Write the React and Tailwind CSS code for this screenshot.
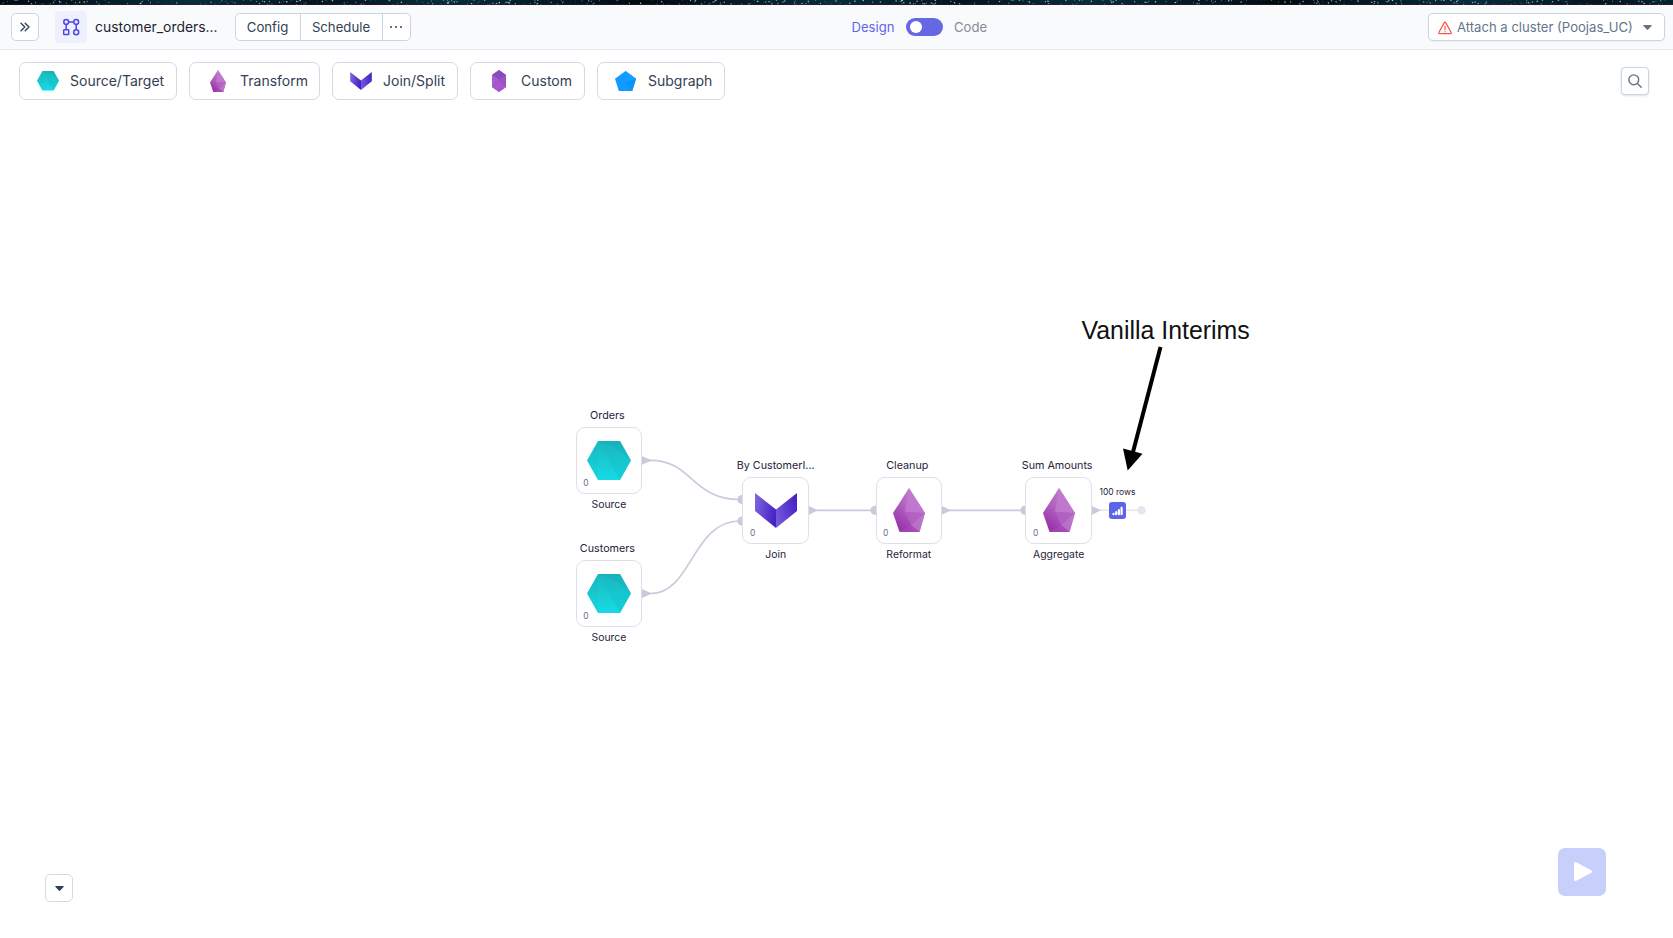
import React from "react";

const stars = Array.from({ length: 620 }, (_, i) => {
  const a = Math.abs(Math.sin(i * 12.9898 + 1) * 43758.5453) % 1;
  const b = Math.abs(Math.sin(i * 78.233 + 2) * 24634.6345) % 1;
  const c = Math.abs(Math.sin(i * 39.425 + 3) * 9631.137) % 1;
  return { x: a * 1673, y: b * 5, r: 0.3 + c * 0.5, o: 0.25 + c * 0.6 };
});

function StarStrip() {
  return (
    <svg className="block h-[5px] w-full shrink-0 bg-[#03151f]" viewBox="0 0 1673 5" preserveAspectRatio="none">
      <defs>
        <linearGradient id="sky" x1="0" x2="320" gradientUnits="userSpaceOnUse" spreadMethod="reflect">
          <stop offset="0" stopColor="#020a10" />
          <stop offset="0.6" stopColor="#062c3d" />
          <stop offset="1" stopColor="#04141e" />
        </linearGradient>
      </defs>
      <rect width="1673" height="5" fill="url(#sky)" />
      {stars.map((s, i) => (
        <circle key={i} cx={s.x} cy={s.y} r={s.r} fill="#b4dbe2" opacity={s.o} />
      ))}
      <rect y="4.4" width="1673" height="0.6" fill="#3d1824" />
    </svg>
  );
}

function Hexagon({ className }) {
  return (
    <svg className={className} viewBox="0 0 44 39">
      <defs>
        <linearGradient id="teal" x1="0" y1="0" x2="0" y2="1">
          <stop offset="0" stopColor="#1bb8c0" />
          <stop offset="0.55" stopColor="#19ccd3" />
          <stop offset="1" stopColor="#15dbe4" />
        </linearGradient>
      </defs>
      <path d="M11 0h22l11 19.5L33 39H11L0 19.5z" fill="url(#teal)" />
      <path d="M11 0h22L44 19.5 31 8z" fill="#12a3ad" opacity=".25" />
      <path d="M11 0l11 19.5L33 39 44 19.5 33 0z" fill="#0fb4bd" opacity=".14" />
      <path d="M11 0v39L0 19.5z" fill="#0fb4bd" opacity=".12" />
      <path d="M22 19.5h22L33 39z" fill="#10c4cd" opacity=".25" />
    </svg>
  );
}

function Drop({ className }) {
  return (
    <svg className={className} viewBox="0 0 32 44">
      <defs>
        <linearGradient id="dropBase" x1="0.7" y1="0.1" x2="0.25" y2="0.9">
          <stop offset="0" stopColor="#c07acd" />
          <stop offset="0.45" stopColor="#b364c2" />
          <stop offset="1" stopColor="#9a36ac" />
        </linearGradient>
      </defs>
      <path d="M16 0l16 25-5.500 19h-20L0 25z" fill="url(#dropBase)" />
      <path d="M16 0l16 25-20-1z" fill="#c27bd0" opacity=".8" />
      <path d="M12 24l20 1-14 12z" fill="#b363c2" opacity=".8" />
      <path d="M32 25L18 37l8.500 7z" fill="#bd79cb" opacity=".8" />
      <path d="M18 37l8.500 7h-20z" fill="#ab4ebb" opacity=".5" />
    </svg>
  );
}

function Chevron({ className }) {
  return (
    <svg className={className} viewBox="0 0 42 35">
      <defs>
        <linearGradient id="chevL" x1="0" y1="0.2" x2="1" y2="0.5">
          <stop offset="0" stopColor="#7e65dc" />
          <stop offset="1" stopColor="#4522c6" />
        </linearGradient>
        <linearGradient id="chevR" x1="0" y1="0.7" x2="1" y2="0.3">
          <stop offset="0" stopColor="#7658dc" />
          <stop offset="1" stopColor="#4522c6" />
        </linearGradient>
      </defs>
      <path d="M0 0l21 16.500V35L0 18z" fill="url(#chevL)" />
      <path d="M42 0L21 16.500V35l21-17z" fill="url(#chevR)" />
    </svg>
  );
}

function Crystal({ className }) {
  return (
    <svg className={className} viewBox="0 0 14 22">
      <path d="M7 0l7 5v12l-7 5-7-5V5z" fill="#9c52c6" />
      <path d="M7 0l7 5-7 5-7-5z" fill="#8a4cbc" />
      <path d="M0 5l7 4-7 8z" fill="#a35fce" />
      <path d="M14 5L7 9.500 14 17z" fill="#9853c6" />
      <path d="M0 17l7-7 7 7-7 5z" fill="#a857cb" />
    </svg>
  );
}

function Pentagon({ className }) {
  return (
    <svg className={className} viewBox="0 0 21 20">
      <path d="M10.500 0L21 7.800 17.200 20H3.800L0 7.800z" fill="#0f9bff" />
      <path d="M10.500 11L21 7.800 17.200 20z" fill="#0a93f8" />
      <path d="M10.500 0L21 7.800l-10.500 3.200z" fill="#139fff" />
    </svg>
  );
}

const palette = [
  { label: "Source/Target", width: "w-[158px]", icon: <Hexagon className="h-[19.5px] w-[22px]" /> },
  { label: "Transform", width: "w-[131px]", icon: <Drop className="h-[22px] w-[16px]" /> },
  { label: "Join/Split", width: "w-[126px]", icon: <Chevron className="h-[18px] w-[22px]" /> },
  { label: "Custom", width: "w-[115px]", icon: <Crystal className="h-[22px] w-[14px]" /> },
  { label: "Subgraph", width: "w-[128px]", icon: <Pentagon className="mr-px h-[20px] w-[21px]" /> },
];

const nodes = [
  { pos: "left-[575.7px] top-[427px]", shift: "ml-[-1.5px]", title: "Orders", kind: "Source", icon: <Hexagon className="h-[39px] w-[44px]" /> },
  { pos: "left-[575.7px] top-[560px]", shift: "ml-[-1.5px]", title: "Customers", kind: "Source", icon: <Hexagon className="h-[39px] w-[44px]" /> },
  { pos: "left-[742.4px] top-[477px]", shift: "ml-0", title: "By CustomerI...", kind: "Join", icon: <Chevron className="h-[35px] w-[42px]" /> },
  { pos: "left-[875.5px] top-[477px]", shift: "ml-[-1.5px]", title: "Cleanup", kind: "Reformat", icon: <Drop className="h-[44px] w-[32px]" /> },
  { pos: "left-[1025.4px] top-[477px]", shift: "ml-[-1.5px]", title: "Sum Amounts", kind: "Aggregate", icon: <Drop className="h-[44px] w-[32px]" /> },
];

function Node({ pos, shift, title, kind, icon }) {
  return (
    <div className={`absolute flex h-[66.5px] w-[66.5px] items-center justify-center rounded-[9px] border border-[#dfdfec] bg-white ${pos}`}>
      <span className={`absolute -top-[21px] left-1/2 -translate-x-1/2 whitespace-nowrap text-[10.75px] leading-[17px] text-[#24243a] ${shift}`}>{title}</span>
      {icon}
      <span className="absolute bottom-[4px] left-[6.5px] text-[8.5px] leading-[12px] text-[#64748b]">0</span>
      <span className="absolute top-[69px] left-1/2 -translate-x-1/2 whitespace-nowrap text-[10.4px] leading-[16px] text-[#24243a]">{kind}</span>
    </div>
  );
}

function Edges() {
  return (
    <svg className="absolute inset-0 h-[938px] w-[1673px]" viewBox="0 0 1673 938" fill="none">
      <g stroke="#cbcadd" strokeWidth="1.7">
        <path d="M645 460.400h6C692 460.400 692 499.500 740 499.500" />
        <path d="M645 593.500h6C692 593.500 692 521 740 521" />
        <path d="M812 510.300h62M945 510.300h79" />
      </g>
      <path d="M1095 510.300h46" stroke="#e6e6ee" strokeWidth="1.4" />
      <g fill="#cbcadd">
        <path d="M642 456l10 4.400-10 4.400zM642 589.100l10 4.400-10 4.400zM809 505.900l9 4.400-9 4.400zM942 505.900l9 4.400-9 4.400zM1092 505.900l9 4.400-9 4.400z" />
        <circle cx="742" cy="499.500" r="4.600" />
        <circle cx="742" cy="521" r="4.600" />
        <circle cx="875" cy="510.300" r="4.600" />
        <circle cx="1025" cy="510.300" r="4.600" />
      </g>
      <circle cx="1141.500" cy="510.300" r="4.200" fill="#e6e6ee" />
      <path d="M1160.500 347L1133 452" stroke="#000" strokeWidth="4" />
      <path d="M1123 448.500l19.500 5.300-14.800 16.700z" fill="#000" />
    </svg>
  );
}

function Header() {
  return (
    <header className="relative flex h-[45px] shrink-0 items-center justify-between border-b border-[#e2e8f0] bg-[#f8fafc] pr-2 pl-[11px] text-[#334155]">
      <div className="flex items-center">
        <button className="flex h-7 w-7 items-center justify-center rounded-[5px] border border-[#cbd5e1] bg-white">
          <svg className="h-[10px] w-[10px]" viewBox="0 0 10 10" fill="none" stroke="#334155" strokeWidth="1.4" strokeLinecap="round" strokeLinejoin="round">
            <path d="M1 1.200L4.800 5 1 8.800M5.200 1.200L9 5 5.200 8.800" />
          </svg>
        </button>
        <div className="ml-4 flex h-8 w-8 items-center justify-center rounded bg-[#eef0fe]">
          <svg className="h-[18px] w-[18px]" viewBox="0 0 18 18" fill="none" stroke="#4f46e5" strokeWidth="1.5">
            <circle cx="4.200" cy="3.900" r="2.400" />
            <circle cx="14.200" cy="3.900" r="2.400" />
            <rect x="1.700" y="11.800" width="5" height="4.800" rx="0.600" />
            <circle cx="14.200" cy="14.200" r="2.500" />
            <path d="M6.600 3.900h5.200M4.200 6.300v5.500M14.200 6.300v5.400" />
          </svg>
        </div>
        <span className="ml-2 w-[124px] whitespace-nowrap text-[13.9px] leading-5 text-[#1e1e32]">customer_orders...</span>
        <div className="ml-[15.500px] flex h-7 w-[176px] items-stretch overflow-hidden rounded-[5px] border border-[#cbd5e1] bg-white text-[13.2px]">
          <button className="w-[65px] border-r border-[#cbd5e1] pt-[1.5px]">Config</button>
          <button className="w-[82px] border-r border-[#cbd5e1] pt-[1.5px]">Schedule</button>
          <button className="flex flex-1 items-center justify-center gap-[2.5px]">
            <i className="h-[2.5px] w-[2.5px] rounded-full bg-[#334155]" />
            <i className="h-[2.5px] w-[2.5px] rounded-full bg-[#334155]" />
            <i className="h-[2.5px] w-[2.5px] rounded-full bg-[#334155]" />
          </button>
        </div>
      </div>
      <div className="absolute left-[851.5px] flex items-center text-[13.1px]">
        <span className="w-[54.500px] pt-[1.5px] text-[#6366e8]">Design</span>
        <span className="flex h-[18px] w-[37px] items-center rounded-full bg-[#6667e3] pl-[4px]">
          <i className="h-3 w-3 rounded-full bg-white" />
        </span>
        <span className="ml-[11px] pt-[1.5px] text-[#8a8a96]">Code</span>
      </div>
      <button className="flex h-7 w-[237px] items-center rounded-[5px] border border-[#cbd5e1] bg-white pl-[9px] text-[13.1px] whitespace-nowrap text-[#64748b] shadow-xs">
        <svg className="mt-[2px] h-[14px] w-[14px] shrink-0" viewBox="0 0 14 14" fill="none" stroke="#f2554d" strokeWidth="1.200" strokeLinejoin="round" strokeLinecap="round">
          <path d="M6.300 1.600a.8.800 0 0 1 1.400 0l5.500 9.900a.8.800 0 0 1-.7 1.200h-11a.8.800 0 0 1-.7-1.200zM7 5.200v3.500M7 10.600v.2" />
        </svg>
        <span className="ml-[5px] w-[175px] pt-[1.5px] text-left">Attach a cluster (Poojas_UC)</span>
        <svg className="ml-[11px] h-[5px] w-[9px]" viewBox="0 0 9 5"><path d="M.8 0h7.400q1 .2.3 1L5.200 4.600q-.7.600-1.400 0L.5 1Q-.2.200.8 0z" fill="#64748b" /></svg>
      </button>
    </header>
  );
}

export default function App() {
  return (
    <div className="relative flex h-[938px] w-[1673px] flex-col overflow-hidden bg-white font-['Inter',sans-serif]">
      <Edges />
      {nodes.map((n) => (
        <Node key={n.title} {...n} />
      ))}
      <div className="absolute top-[486px] left-[1117.5px] -translate-x-1/2 text-[8.5px] leading-3 whitespace-nowrap text-[#24243a]">100 rows</div>
      <div className="absolute top-[502px] left-[1108.600px] flex h-[17px] w-[17px] items-center justify-center rounded-[3px] bg-[#5c64e8]">
        <svg className="h-[10px] w-[11px]" viewBox="0 0 11 10" fill="none" stroke="#fff" strokeWidth="2.200" strokeLinecap="round">
          <path d="M1.500 7.800v.4M4.200 6.200v2M6.900 4v4.200M9.600 1.800v6.400" />
        </svg>
      </div>
      <div className="absolute top-[314px] left-[1081.5px] font-['Liberation_Sans',sans-serif] text-[24.9px] leading-8 whitespace-nowrap text-[#111]">Vanilla Interims</div>

      <StarStrip />
      <Header />
      <div className="flex items-start justify-between pt-3 pr-6 pl-[19px]">
        <div className="flex gap-3">
          {palette.map((p) => (
            <button key={p.label} className={`flex h-[38px] items-center rounded-[7px] border border-[#d3dae4] bg-white text-[14px] text-[#334155] ${p.width}`}>
              <span className="ml-[17px] flex w-[22px] justify-center">{p.icon}</span>
              <span className="mb-px ml-[11px] whitespace-nowrap">{p.label}</span>
            </button>
          ))}
        </div>
        <button className="mt-[5px] flex h-7 w-7 items-center justify-center rounded border border-[#cbd5e1] bg-white shadow-sm">
          <svg className="h-[14px] w-[14px]" viewBox="0 0 14 14" fill="none" stroke="#64748b" strokeWidth="1.400" strokeLinecap="round">
            <circle cx="5.800" cy="5.800" r="4.900" />
            <path d="M9.400 9.400L13.200 13.200" />
          </svg>
        </button>
      </div>
      <div className="mt-auto flex items-end justify-between pr-[67px] pb-[36px] pl-[45px]">
        <button className="flex h-7 w-7 items-center justify-center rounded-[5px] border border-[#d3dae4] bg-white">
          <svg className="mt-[1px] h-[5px] w-[9px]" viewBox="0 0 9 5"><path d="M.8 0h7.400q1 .2.3 1L5.200 4.600q-.7.600-1.400 0L.5 1Q-.2.200.8 0z" fill="#334155" /></svg>
        </button>
        <button className="mb-[6.5px] flex h-12 w-12 items-center justify-center rounded-[7px] bg-[#c7d0fa]">
          <svg className="ml-[1px] h-[21px] w-[20px]" viewBox="0 0 20 21"><path d="M2.500 2.500v16L17.500 10.500z" fill="#fff" stroke="#fff" strokeWidth="3" strokeLinejoin="round" /></svg>
        </button>
      </div>
    </div>
  );
}
